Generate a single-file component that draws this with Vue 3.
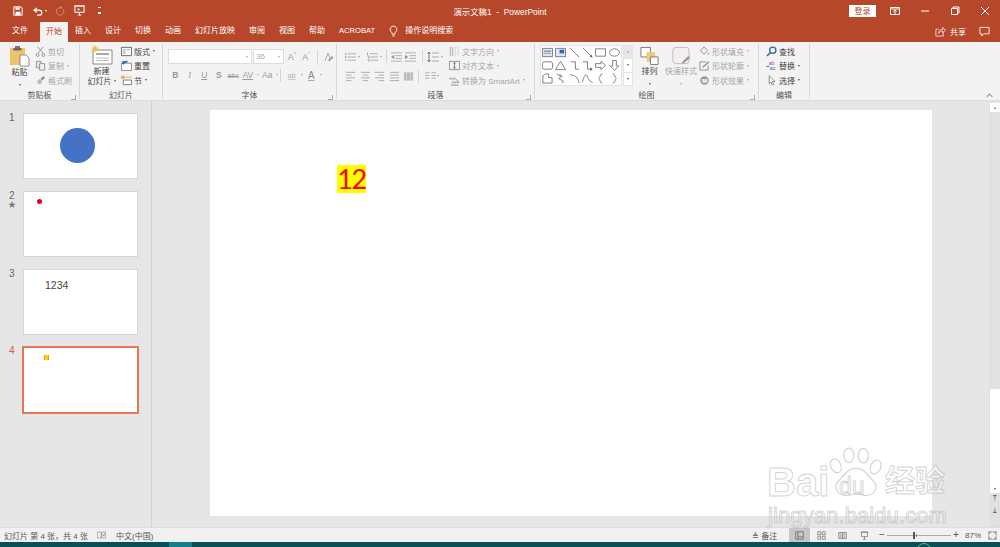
<script setup>
// 图标 (inner svg markup, viewBox 0 0 12 12)
const g = '#8f8f8f'
const icons = {
  cut: `<path d="M3 1l6 7M9 1L3 8" stroke="${g}" fill="none"/><circle cx="2.8" cy="9.8" r="1.6" stroke="${g}" fill="none"/><circle cx="9.2" cy="9.8" r="1.6" stroke="${g}" fill="none"/>`,
  copy: `<path d="M1.5 1.5h5v7h-5z" fill="#e8e8e8" stroke="${g}"/><path d="M5 4h5.5v7H5z" fill="#f3f3f3" stroke="${g}"/>`,
  brush: `<path d="M6 4l3-3 2 2-3 3z" fill="${g}"/><path d="M2 7l3-3 3 3-2 3H4z" fill="#bbb"/>`,
  layout: `<path d="M.5 1.5h11v9H.5z" fill="#fff" stroke="#666"/><path d="M2 3h3v6H2zM6 3h4v2H6z" fill="#c9c9c9"/>`,
  reset: `<path d="M.5 3.5h11v8H.5z" fill="#fff" stroke="#888"/><path d="M2 4.5A4 4 0 0 1 7 2" stroke="#2b6aa8" stroke-width="2" fill="none"/><path d="M1 1l4 .5-2 3.5z" fill="#2b6aa8"/>`,
  section: `<path d="M.5 1.5h3v2h-3z" fill="#f4c77b" stroke="#d99a3c"/><path d="M5 2.5h6.5" stroke="#f0a030"/><path d="M2.5 5.5h9v5h-9z" fill="#fff" stroke="#777"/>`,
  fill: `<path d="M5.5 1l4 4-4 4-4-4z" fill="#eee" stroke="${g}"/><circle cx="10.3" cy="8.5" r="1.2" fill="#bbb"/>`,
  outline: `<path d="M1 2h7M1 2v9h9V6" stroke="${g}" fill="none"/><path d="M4 8l7-6" stroke="${g}" stroke-width="1.5"/>`,
  effect: `<circle cx="6" cy="6" r="4.6" fill="#999"/><path d="M2 4h8l-1 5H4z" fill="#e4e4e4" stroke="${g}" stroke-width=".6"/>`,
  find: `<circle cx="7.4" cy="4.6" r="3.4" fill="none" stroke="#2b6aa8" stroke-width="1.4"/><path d="M5 7L1 11" stroke="#2b6aa8" stroke-width="1.6"/>`,
  replace: `<text x="3" y="5" font-size="5.4" fill="#8a4bb5" font-family="Liberation Sans">ab</text><text x="4" y="11" font-size="5.4" fill="#2b6aa8" font-family="Liberation Sans">ac</text><path d="M.5 7h3" stroke="#2b6aa8"/>`,
  select: `<path d="M3.5 .8v8.6l2-1.7 1.5 3.2 1.4-.7L7 7h2.7z" fill="#fff" stroke="#666" stroke-width=".8"/>`,
  dirText: `<path d="M1.5 1v10M4 1v10" stroke="#a5a5a5"/><path d="M7 1v10M10 1v10" stroke="#c4c4c4" stroke-dasharray="1.5 1"/>`,
  alignText: `<path d="M.5 1.5h11v9H.5z" fill="none" stroke="${g}"/><path d="M6 3v6M4.5 4L6 2.5 7.5 4M4.5 8L6 9.5 7.5 8" stroke="#777" fill="none"/>`,
  smartArt: `<path d="M0 3h7v2H0zM3 7h5v2H3z" fill="#b5b5b5"/><path d="M7 4l4 4H8" stroke="${g}" fill="none"/><path d="M2 11h9" stroke="${g}"/>`,
}

const clipRows = [
  {text: '剪切', icon: 'cut'},
  {text: '复制', icon: 'copy', arrow: true},
  {text: '格式刷', icon: 'brush'},
]
const slideRows = [
  {text: '版式', icon: 'layout', arrow: true},
  {text: '重置', icon: 'reset'},
  {text: '节', icon: 'section', arrow: true},
]
const paraRows = [
  {text: '文字方向', icon: 'dirText', arrow: true},
  {text: '对齐文本', icon: 'alignText', arrow: true},
  {text: '转换为 SmartArt', icon: 'smartArt', arrow: true},
]
const shapeRows = [
  {text: '形状填充', icon: 'fill', arrow: true},
  {text: '形状轮廓', icon: 'outline', arrow: true},
  {text: '形状效果', icon: 'effect', arrow: true},
]
const editRows = [
  {text: '查找', icon: 'find'},
  {text: '替换', icon: 'replace', arrow: true},
  {text: '选择', icon: 'select', arrow: true},
]

const tabs = ['文件', '开始', '插入', '设计', '切换', '动画', '幻灯片放映', '审阅', '视图', '帮助', 'ACROBAT']

const aligns = ['M1 2h10M1 5h6M1 8h10M1 11h6', 'M1 2h10M3 5h6M1 8h10M3 11h6', 'M1 2h10M5 5h6M1 8h10M5 11h6', 'M1 2h10M1 5h10M1 8h10M1 11h10']

// 形状库
const shapes = [
  '<path d="M.5 1.5h11v9H.5z" fill="#dfe8f2" stroke="#777"/><path d="M2 4h8v1H2z" fill="#2b6aa8"/><path d="M2 7h8" stroke="#999"/>',
  '<path d="M.5 1.5h11v9H.5z" fill="#dfe8f2" stroke="#777"/><path d="M5 3h5v4H5z" fill="#2b6aa8"/>',
  '<path d="M1 1l10 10" stroke="#777" fill="none"/>',
  '<path d="M1 1l9 9" stroke="#777" fill="none"/><path d="M8.500 10.500l3 1-1-3z" fill="#555"/>',
  '<path d="M.5 2h11v8H.5z" fill="none" stroke="#777"/>',
  '<ellipse cx="6" cy="6" rx="5.500" ry="4" fill="none" stroke="#777"/>',
  '<rect x=".5" y="2" width="11" height="8" rx="2" fill="none" stroke="#777"/>',
  '<path d="M6 1.500l5.500 9H.5z" fill="none" stroke="#777"/>',
  '<path d="M2 2h5v8h4" fill="none" stroke="#777"/>',
  '<path d="M1 2h5v8h3" fill="none" stroke="#777"/><path d="M9 8l2.500 2-2.500 2z" fill="#555"/>',
  '<path d="M.5 4h6V1.500L11.500 6l-5 4.500V8h-6z" fill="none" stroke="#777"/>',
  '<path d="M4 .5h4v6h2.500L6 11.500 1.500 6.500H4z" fill="none" stroke="#777"/>',
  '<path d="M1 11V3l3-2h3v4h4v6z" fill="none" stroke="#777"/>',
  '<path d="M2 1l5 3-3 2 5 3-1 2M5 1l3 3" fill="none" stroke="#777"/>',
  '<path d="M1 2c5 0 9 3 10 9" fill="none" stroke="#777"/>',
  '<path d="M.5 10C2 4 3 2 4.500 2S7 10 11.500 10" fill="none" stroke="#777"/>',
  '<path d="M8 1C5 1 6 5 4 6c2 1 1 5 4 5" fill="none" stroke="#777"/>',
  '<path d="M4 1c3 0 2 4 4 5-2 1-1 5-4 5" fill="none" stroke="#777"/>',
]
</script>

<template>
  <div class="app">
    <!-- 标题栏 -->
    <div class="titlebar">
      <div class="qat">
        <svg class="qa save" viewBox="0 0 12 12"><path d="M1 1h8.500L11 2.500V11H1z" fill="none" stroke="#fff" stroke-width="1.200"/><path d="M3 1.500h5v3H3zM3 7h6v4H3z" fill="#fff"/></svg>
        <svg class="qa undo" viewBox="0 0 12 12"><path d="M3 5h4.500a3 3 0 0 1 0 6H5" fill="none" stroke="#fff" stroke-width="1.500"/><path d="M4.500 1.500v7L0 5z" fill="#fff"/></svg>
        <span class="mini-arrow white"></span>
        <svg class="qa redo" viewBox="0 0 12 12"><path d="M9.500 3.500a4.500 4.500 0 1 1-3-1.500" fill="none" stroke="#d98a73" stroke-width="1.200"/><path d="M6 0v4l3-2z" fill="#d98a73"/></svg>
        <svg class="qa present" viewBox="0 0 12 12"><path d="M1 1h10v7H1z" fill="none" stroke="#fff" stroke-width="1.100"/><path d="M.5 1h11M6 8v3M4 11h4" stroke="#fff"/><path d="M4 3.500l3 1-3 1.500z" fill="#fff"/></svg>
        <span class="qat-more"></span>
      </div>
      <div class="doc-title">演示文稿1 &nbsp;-&nbsp; PowerPoint</div>
      <div class="win-btns">
        <button class="login">登录</button>
        <svg class="win" viewBox="0 0 12 12"><path d="M1.500 2.500h9v7h-9zM1.500 4h9" fill="none" stroke="#fff"/><path d="M6 9V5M4.500 6.500L6 5l1.500 1.500" fill="none" stroke="#fff"/></svg>
        <svg class="win" viewBox="0 0 12 12"><path d="M2 6h8" stroke="#fff"/></svg>
        <svg class="win" viewBox="0 0 12 12"><path d="M2.500 3.500h6v6h-6zM4 3.500V2h6v6H8.500" fill="none" stroke="#fff"/></svg>
        <svg class="win" viewBox="0 0 12 12"><path d="M2 2l8 8M10 2l-8 8" stroke="#fff"/></svg>
      </div>
    </div>

    <!-- 选项卡 -->
    <div class="tabbar">
      <div v-for="t in tabs" :key="t" class="tab" :class="{active: t === '开始', latin: t === 'ACROBAT'}">{{ t }}</div>
      <svg class="bulb" viewBox="0 0 10 13"><path d="M5 1a3.800 3.800 0 0 0-2 7l.5 2h3L7 8a3.800 3.800 0 0 0-2-7zM3.500 12h3" fill="none" stroke="#fff"/></svg>
      <div class="tell-me">操作说明搜索</div>
      <div class="share">
        <svg class="share-icon" viewBox="0 0 12 12"><path d="M9 7v4H1V3.500h3" fill="none" stroke="#fff" stroke-width=".8"/><path d="M4 8c0-3 2-4.500 4.500-4.500V1.500L11.500 4.500 8.500 7.500V5.500C6.500 5.500 5 6.500 4 8z" fill="none" stroke="#fff" stroke-width=".8"/></svg>
        <span>共享</span>
        <svg class="comment" viewBox="0 0 12 12"><path d="M1 1.500h10v7H5L3 11V8.500H1z" fill="none" stroke="#fff" stroke-width=".9"/></svg>
      </div>
    </div>

    <!-- 功能区 -->
    <div class="ribbon">
      <div class="group clip">
        <div class="group-body">
          <div class="big paste">
            <svg class="big-icon" viewBox="0 0 20 22"><path d="M0 3h15v17H0z" fill="#eec26f"/><path d="M5 1h5v3H5z" fill="#777"/><path d="M3.500 3h8v2.500h-8z" fill="#666"/><path d="M10 10h6l3 3v8h-9z" fill="#fff" stroke="#777" stroke-width=".8"/></svg>
            <span class="big-text dark">粘贴</span>
            <span class="mini-arrow"></span>
          </div>
          <div class="small-col">
            <div v-for="r in clipRows" :key="r.text" class="small muted">
              <svg class="small-icon" viewBox="0 0 12 12" v-html="icons[r.icon]"></svg>
              <span>{{ r.text }}</span>
              <i v-if="r.arrow" class="mini-arrow pale"></i>
            </div>
          </div>
        </div>
        <div class="group-label">剪贴板<span class="launcher"></span></div>
      </div>

      <div class="group slides">
        <div class="group-body">
          <div class="big new-slide">
            <svg class="big-icon wide" viewBox="0 0 22 20"><path d="M2 5h19v14H2z" fill="#fff" stroke="#8a8a8a"/><path d="M5 9h13" stroke="#aaa" stroke-width="2"/><path d="M5 13h13M5 15.500h13" stroke="#bbb"/><circle cx="4" cy="4" r="2.300" fill="#f5b942"/><path d="M4 0v8M0 4h8M1 1l6 6M7 1L1 7" stroke="#f5b942" stroke-width=".6"/></svg>
            <span class="big-text dark">新建</span>
            <span class="big-text dark">幻灯片<i class="mini-arrow inline"></i></span>
          </div>
          <div class="small-col">
            <div v-for="r in slideRows" :key="r.text" class="small">
              <svg class="small-icon" viewBox="0 0 12 12" v-html="icons[r.icon]"></svg>
              <span>{{ r.text }}</span>
              <i v-if="r.arrow" class="mini-arrow"></i>
            </div>
          </div>
        </div>
        <div class="group-label">幻灯片</div>
      </div>

      <div class="group font">
        <div class="group-body rows">
          <div class="row top">
            <div class="combo name"><i class="mini-arrow pale"></i></div>
            <div class="combo size"><span>36</span><i class="mini-arrow pale"></i></div>
            <span class="grow-a">A<sup>^</sup></span>
            <span class="grow-a">A<sup>ˇ</sup></span>
            <span class="sep"></span>
            <svg class="tool-icon" viewBox="0 0 12 12"><path d="M3 10L6 2l2 5" fill="none" stroke="#aaa"/><path d="M6 9l4-4 1.500 1.500-4 4z" fill="#b98fb0"/></svg>
          </div>
          <div class="row">
            <span class="tool bold">B</span>
            <span class="tool ital">I</span>
            <span class="tool under">U</span>
            <span class="tool bold">S</span>
            <span class="tool tiny strike">abc</span>
            <span class="tool under">AV</span><i class="mini-arrow pale slot"></i>
            <span class="tool">Aa</span><i class="mini-arrow pale slot"></i>
            <span class="sep mid"></span>
            <span class="tool marker">ab</span><i class="mini-arrow pale slot"></i>
            <span class="tool big-a">A</span><i class="mini-arrow pale slot"></i>
          </div>
        </div>
        <div class="group-label">字体<span class="launcher"></span></div>
      </div>

      <div class="group para">
        <div class="group-body">
          <div class="rows para-left">
            <div class="row top">
              <svg class="tool-icon list" viewBox="0 0 12 12"><path d="M3 2.500h9M3 6h9M3 9.500h9" stroke="#aaa"/><path d="M0 2h1.500v1.500H0zM0 5.200h1.500v1.500H0zM0 8.700h1.500v1.500H0z" fill="#999"/></svg><i class="mini-arrow pale slot"></i>
              <svg class="tool-icon list second" viewBox="0 0 12 12"><path d="M3 2.500h9M3 6h9M3 9.500h9" stroke="#aaa"/><path d="M.5 1v3M.5 5h1.500v3M.5 9h1.500v2" stroke="#999" fill="none"/></svg><i class="mini-arrow pale slot"></i>
              <span class="sep para-sep"></span>
              <svg class="tool-icon indent" viewBox="0 0 12 12"><path d="M0 1.500h12M5 4.500h7M5 7.500h7M0 10.500h12" stroke="#aaa"/><path d="M3.500 3.500v5L0 6z" fill="#6f9cc8"/></svg>
              <svg class="tool-icon indent" viewBox="0 0 12 12"><path d="M0 1.500h12M5 4.500h7M5 7.500h7M0 10.500h12" stroke="#aaa"/><path d="M0 3.500v5L3.500 6z" fill="#6f9cc8"/></svg>
              <span class="sep para-sep"></span>
              <svg class="tool-icon" viewBox="0 0 12 12"><path d="M5 2h7M5 6h7M5 10h7" stroke="#aaa"/><path d="M2 1v10M.5 3L2 1l1.500 2M.5 9L2 11l1.500-2" fill="none" stroke="#777"/></svg><i class="mini-arrow pale slot"></i>
            </div>
            <div class="row align-row">
              <svg v-for="d in aligns" :key="d" class="tool-icon align" viewBox="0 0 12 12"><path :d="d" stroke="#aaa"/></svg>
              <svg class="tool-icon align" viewBox="0 0 12 12"><path d="M1 2h10v9H1z" fill="#bbb"/><path d="M4 .5v11M8 .5v11" stroke="#f3f3f3" stroke-width=".5"/></svg>
              <span class="sep mid"></span>
              <svg class="tool-icon cols" viewBox="0 0 12 12"><path d="M0 2.500h5M0 5.500h5M0 8.500h5M7 2.500h5M7 5.500h5M7 8.500h5" stroke="#aaa"/></svg><i class="mini-arrow pale slot"></i>
            </div>
          </div>
          <div class="small-col para-col">
            <div v-for="r in paraRows" :key="r.text" class="small muted">
              <svg class="small-icon" viewBox="0 0 12 12" v-html="icons[r.icon]"></svg>
              <span>{{ r.text }}</span>
              <i class="mini-arrow pale"></i>
            </div>
          </div>
        </div>
        <div class="group-label">段落<span class="launcher"></span></div>
      </div>

      <div class="group draw">
        <div class="group-body">
          <div class="gallery">
            <svg v-for="(s, i) in shapes" :key="i" class="shape" viewBox="0 0 12 12" v-html="s"></svg>
          </div>
          <div class="gallery-scroll">
            <span class="up"><i class="mini-arrow up-arrow pale"></i></span>
            <span><i class="mini-arrow"></i></span>
            <span class="more"><i class="mini-arrow"></i></span>
          </div>
          <div class="big arrange">
            <svg class="big-icon" viewBox="0 0 20 20"><path d="M1 1h10v10H1z" fill="#fff" stroke="#777"/><path d="M7 6h9v6h-4v4H7z" fill="#f0c67c"/><path d="M11 11h8v8h-8z" fill="#fff" stroke="#777"/></svg>
            <span class="big-text dark">排列</span>
            <span class="mini-arrow arrow-low"></span>
          </div>
          <div class="big quick">
            <svg class="big-icon" viewBox="0 0 20 20"><rect x="1" y="1" width="17" height="17" rx="3" fill="#f2eef2" stroke="#bbb"/><path d="M10 17l7-7 2 2-7 6z" fill="#999"/></svg>
            <span class="big-text pale-text">快速样式</span>
            <span class="mini-arrow pale arrow-low"></span>
          </div>
          <div class="small-col shape-col">
            <div v-for="r in shapeRows" :key="r.text" class="small muted">
              <svg class="small-icon" viewBox="0 0 12 12" v-html="icons[r.icon]"></svg>
              <span>{{ r.text }}</span>
              <i class="mini-arrow pale"></i>
            </div>
          </div>
        </div>
        <div class="group-label">绘图<span class="launcher"></span></div>
      </div>

      <div class="group edit">
        <div class="group-body">
          <div class="small-col edit-col">
            <div v-for="r in editRows" :key="r.text" class="small">
              <svg class="small-icon" viewBox="0 0 12 12" v-html="icons[r.icon]"></svg>
              <span>{{ r.text }}</span>
              <i v-if="r.arrow" class="mini-arrow"></i>
            </div>
          </div>
        </div>
        <div class="group-label">编辑</div>
      </div>

      <svg class="collapse" viewBox="0 0 10 6"><path d="M1 5l4-4 4 4" fill="none" stroke="#555" stroke-width="1.300"/></svg>
    </div>

    <!-- 主体 -->
    <div class="main">
      <div class="thumbs">
        <div class="thumb-row">
          <div class="thumb-num">1</div>
          <div class="thumb"><span class="circle"></span></div>
        </div>
        <div class="thumb-row">
          <div class="thumb-num">2<em>★</em></div>
          <div class="thumb"><span class="dot"></span></div>
        </div>
        <div class="thumb-row">
          <div class="thumb-num">3</div>
          <div class="thumb"><span class="num-text">1234</span></div>
        </div>
        <div class="thumb-row current">
          <div class="thumb-num">4</div>
          <div class="thumb"><span class="mini-mark"></span></div>
        </div>
      </div>

      <div class="editor">
        <div class="slide">
          <span class="slide-text">12</span>
        </div>
      </div>

      <div class="vscroll">
        <span class="vbtn"><i class="mini-arrow up-arrow dark-arrow"></i></span>
        <div class="vtrack"><div class="vthumb"></div></div>
        <span class="vbtn"><i class="mini-arrow dark-arrow"></i></span>
        <span class="vnav">⤒</span>
        <span class="vnav">⤓</span>
      </div>

      <!-- 水印 -->
      <div class="watermark">
        <svg class="paw" viewBox="0 0 100 90"><ellipse cx="14" cy="34" rx="9" ry="13" transform="rotate(-25 14 34)"/><ellipse cx="37" cy="15" rx="9" ry="13"/><ellipse cx="63" cy="16" rx="9" ry="13"/><ellipse cx="85" cy="36" rx="9" ry="13" transform="rotate(25 85 36)"/><path d="M50 38c14 0 22 14 32 24 8 10 2 25-14 25-8 0-12-3-18-3s-10 3-18 3c-16 0-22-15-14-25 10-10 18-24 32-24z"/></svg>
        <span class="wm wm-bai">Bai</span>
        <span class="wm wm-du">du</span>
        <span class="wm wm-cn">经验</span>
        <span class="wm wm-url">jingyan.baidu.com</span>
      </div>
    </div>

    <!-- 状态栏 -->
    <div class="statusbar">
      <span class="st-count">幻灯片 第 4 张，共 4 张</span>
      <svg class="st-check" viewBox="0 0 12 10"><path d="M.5 1h5v8h-5zM6.500 1h5v8h-5z" fill="none" stroke="#777" stroke-width=".7"/><path d="M7.500 4l1.500 2 2-4" fill="none" stroke="#666" stroke-width=".7"/></svg>
      <span class="st-lang">中文(中国)</span>
      <span class="st-notes">≜ 备注</span>
      <div class="st-views">
        <span class="view active"><svg viewBox="0 0 12 12"><path d="M1 1h10v10H1zM4 1v10M4 8h7" fill="none" stroke="#666"/></svg></span>
        <span class="view"><svg viewBox="0 0 12 12"><path d="M1 1h4v4H1zM7 1h4v4H7zM1 7h4v4H1zM7 7h4v4H7z" fill="none" stroke="#777"/></svg></span>
        <span class="view"><svg viewBox="0 0 12 12"><path d="M1 2h10v8H1zM6 2v8" fill="none" stroke="#777"/><path d="M2 3h3v6H2zM7 3h3v6H7z" fill="#bbb"/></svg></span>
        <span class="view"><svg viewBox="0 0 12 12"><path d="M1 1.500h10M2 1.500h8v6H2zM6 7.500V11M4 11h4" fill="none" stroke="#777"/></svg></span>
      </div>
      <div class="zoom">
        <span class="pm">−</span>
        <div class="zoom-track"><span class="zoom-mid"></span><span class="zoom-thumb"></span></div>
        <span class="pm">+</span>
        <span class="pct">87%</span>
        <svg class="fit" viewBox="0 0 12 12"><path d="M.5.500h11v11H.5z" fill="none" stroke="#777" stroke-width=".7"/><path d="M2 4.500V2h2.500M7.500 2H10v2.500M10 7.500V10H7.500M4.500 10H2V7.500" fill="none" stroke="#777"/></svg>
      </div>
    </div>

    <!-- 任务栏 -->
    <div class="taskbar"><span class="task-item"></span><span class="task-dot"></span></div>
  </div>
</template>

<style scoped>
.app {
  width: 1000px;
  height: 547px;
  display: flex;
  flex-direction: column;
  overflow: hidden;
  position: relative;
  font-family: "Liberation Sans", "Noto Sans CJK SC", sans-serif;
  font-size: 8px;
  color: #444;
  background: #e6e6e6;
}

.mini-arrow {
  display: inline-block;
  width: 0;
  height: 0;
  border-left: 1.5px solid transparent;
  border-right: 1.5px solid transparent;
  border-top: 2px solid #555;
  flex: none;
}
.mini-arrow.white { border-top-color: #fff; }
.mini-arrow.pale { border-top-color: #aaa; }
.mini-arrow.up-arrow { border-top: 0; border-bottom: 2px solid #aaa; }
.mini-arrow.inline { margin-left: 2px; vertical-align: 2px; }

/* 标题栏 */
.titlebar {
  height: 21px;
  flex: none;
  background: #b7472a;
  color: #fff;
  display: flex;
  align-items: center;
  position: relative;
}
.qat {
  display: flex;
  align-items: center;
  width: 300px;
  box-sizing: border-box;
  padding-left: 13px;
}
.qa { width: 10px; height: 10px; flex: none; }
.undo { margin-left: 10px; }
.titlebar .mini-arrow { margin-left: 2px; }
.redo { margin-left: 8px; }
.present { margin-left: 9px; width: 11px; height: 11px; }
.qat-more {
  width: 3px;
  height: 4px;
  margin-left: 13px;
  border-top: 1px solid #fff;
  border-bottom: 2px solid #fff;
}
.doc-title {
  width: 400px;
  text-align: center;
  font-size: 8.400px;
}
.win-btns {
  margin-left: auto;
  display: flex;
  align-items: center;
  padding-right: 9px;
}
.login {
  width: 27px;
  height: 12px;
  padding: 0;
  border: 0;
  background: #fff;
  color: #b7472a;
  font: 8px "Noto Sans CJK SC", sans-serif;
  margin-right: 13px;
}
.win { width: 12px; height: 12px; margin-right: 18px; flex: none; }
.win:last-child { margin-right: 0; }

/* 选项卡 */
.tabbar {
  height: 21px;
  flex: none;
  background: #b7472a;
  color: #fff;
  display: flex;
  align-items: stretch;
  padding-left: 5px;
}
.tab {
  padding: 0 7px;
  line-height: 20px;
  white-space: nowrap;
}
.tab.latin { font-size: 7.600px; }
.tab.active {
  background: #f3f3f3;
  color: #b7472a;
  margin: 1px 0 0 5px;
  line-height: 19px;
  padding: 0 6px;
  width: 28px;
  box-sizing: border-box;
}
.bulb { width: 9px; height: 12px; margin: 4px 0 0 7px; flex: none; }
.tell-me { margin-left: 7px; line-height: 20px; white-space: nowrap; }
.share {
  margin-left: auto;
  display: flex;
  align-items: center;
  padding-right: 10px;
  height: 20px;
}
.share-icon { width: 11px; height: 11px; margin-right: 4px; }
.comment { width: 11px; height: 11px; margin-left: 13px; }

/* 功能区 */
.ribbon {
  height: 59px;
  flex: none;
  background: #f3f3f3;
  border-bottom: 1px solid #dcdcdc;
  box-sizing: border-box;
  display: flex;
  position: relative;
  padding-top: 2px;
}
.group {
  height: 55px;
  flex: none;
  box-sizing: border-box;
  border-right: 1px solid #d8d8d8;
  display: flex;
  flex-direction: column;
  position: relative;
}
.clip { width: 80px; }
.slides { width: 83px; }
.font { width: 174px; }
.para { width: 198px; }
.draw { width: 224px; }
.edit { width: 51px; }
.group-body {
  height: 45px;
  box-sizing: border-box;
  display: flex;
  flex: none;
}
.group-label {
  text-align: center;
  line-height: 13px;
  color: #555;
  position: relative;
}
.launcher {
  position: absolute;
  right: 3px;
  bottom: 2px;
  width: 4px;
  height: 4px;
  border-left: 1px solid #aaa;
  border-bottom: 1px solid #aaa;
  transform: scaleX(-1);
}

.big {
  display: flex;
  flex-direction: column;
  align-items: center;
  flex: none;
}
.big-icon { width: 19px; height: 20px; margin-top: 2px; margin-bottom: 2px; flex: none; }
.big-text { line-height: 10px; white-space: nowrap; }
.dark { color: #444; }
.pale-text { color: #a6a6a6; }
.paste { width: 31px; margin-left: 4px; }
.paste .big-icon { margin-bottom: 1px; margin-top: 1px; width: 20px; height: 22px; }
.paste .mini-arrow { margin-top: 6px; }
.arrow-low { margin-top: 6px; }

.small-col {
  display: flex;
  flex-direction: column;
  flex: none;
}
.small {
  height: 14.500px;
  display: flex;
  align-items: center;
  white-space: nowrap;
}
.small .mini-arrow { margin-left: 3px; }
.small-icon { width: 11px; height: 11px; margin-right: 2px; flex: none; }
.muted { color: #a6a6a6; }

.new-slide { width: 37px; margin-left: 3px; }
.new-slide .big-icon { width: 22px; height: 20px; margin-top: 1px; margin-bottom: 2px; }
.slides .small-col { margin-left: 1px; }

/* 字体 */
.rows { flex-direction: column; }
.font .rows { padding: 5px 0 0 5px; }
.row { display: flex; align-items: center; }
.row.top { height: 15px; }
.font .row:last-child { margin-top: 4px; height: 14px; }
.combo {
  height: 15px;
  box-sizing: border-box;
  background: #fff;
  border: 1px solid #dcdcdc;
  display: flex;
  align-items: center;
  justify-content: flex-end;
  padding-right: 3px;
  color: #aaa;
}
.combo.name { width: 84px; flex: none; }
.combo.size { width: 31px; flex: none; margin-left: 1px; justify-content: space-between; padding-left: 2px; }
.grow-a { color: #999; font-size: 9px; width: 14px; text-align: center; flex: none; }
.grow-a sup { font-size: 5px; line-height: 0; }
.combo + .combo + .grow-a { margin-left: 1px; }
.sep { width: 1px; height: 13px; background: #d4d4d4; margin: 0 4px; flex: none; }
.tool {
  width: 14.500px;
  text-align: center;
  color: #999;
  font-size: 8.500px;
  flex: none;
}
.tool-icon { width: 12px; height: 12px; flex: none; }
.slot { margin: 0 1.500px; }
.bold { font-weight: bold; }
.ital { font-style: italic; font-family: "Liberation Serif", serif; }
.under { text-decoration: underline; }
.strike { text-decoration: line-through; }
.tiny { font-size: 7px; }
.marker { color: #aaa; text-decoration: underline; text-decoration-color: #c9c9c9; font-size: 7px; }
.big-a { font-size: 10px; color: #888; text-decoration: underline; text-decoration-color: #aaa; }

/* 段落 */
.para-left { width: 112px; flex: none; padding: 6px 0 0 8px; box-sizing: border-box; display: flex; }
.para-left .row.top { height: 13px; }
.align-row { margin-top: 6px; height: 14px; }
.list { width: 11px; }
.list.second { margin-left: 6px; }
.indent { margin-right: 3px; width: 11px; }
.para-sep { margin: 0 4px 0 3px; }
.align { width: 11px; margin-right: 3.500px; }
.mid { margin: 0 4px 0 0; }
.cols { width: 11px; margin-left: 2px; }

/* 绘图 */
.draw .group-body { padding-left: 5px; }
.gallery {
  width: 82px;
  height: 41px;
  box-sizing: border-box;
  background: #fff;
  border: 1px solid #e2e2e2;
  display: grid;
  grid-template-columns: repeat(6, 1fr);
  grid-template-rows: repeat(3, 1fr);
  place-items: center;
  flex: none;
  margin-top: 1px;
}
.shape { width: 11px; height: 11px; }
.gallery-scroll {
  width: 10px;
  height: 41px;
  margin: 1px 0 0 1px;
  display: flex;
  flex-direction: column;
  flex: none;
}
.gallery-scroll span {
  flex: 1;
  background: #fff;
  border: 1px solid #e4e4e4;
  border-top-width: 0;
  display: flex;
  align-items: center;
  justify-content: center;
}
.gallery-scroll .up { background: #e6e6e6; border-top-width: 1px; }
.arrange { width: 25px; margin-left: 4px; }
.arrange .big-icon, .quick .big-icon { margin-bottom: 1px; }
.quick { width: 36px; margin-left: 1px; }

/* 编辑 */
.edit-col { margin-left: 7px; }

.collapse {
  position: absolute;
  right: 7px;
  bottom: 2px;
  width: 7px;
  height: 5px;
}

/* 主体 */
.main {
  flex: 1;
  display: flex;
  min-height: 0;
  position: relative;
}
.thumbs {
  width: 152px;
  flex: none;
  box-sizing: border-box;
  border-right: 1px solid #d2d2d2;
  padding-top: 12px;
  display: flex;
  flex-direction: column;
  gap: 12px;
}
.thumb-row { display: flex; height: 66px; }
.thumb-num {
  width: 23px;
  padding: 0 0 0 9px;
  box-sizing: border-box;
  color: #666;
  font-size: 10px;
  line-height: 10px;
  flex: none;
}
.thumb-num em {
  display: block;
  font-style: normal;
  font-size: 8px;
  line-height: 8px;
  margin-left: -1px;
  color: #777;
}
.thumb {
  width: 115px;
  height: 66px;
  background: #fff;
  border: 1px solid #d6d6d6;
  box-sizing: border-box;
  position: relative;
}
.current { margin-top: -1px; }
.current .thumb-num { color: #d9583a; }
.current .thumb {
  width: 117px;
  height: 68px;
  border: 2px solid #ea7553;
  margin-left: -1px;
}
.circle {
  position: absolute;
  left: 36px;
  top: 14px;
  width: 35px;
  height: 35px;
  border-radius: 50%;
  background: #4472c4;
}
.dot {
  position: absolute;
  left: 13px;
  top: 7px;
  width: 5px;
  height: 5px;
  border-radius: 50%;
  background: #e0001b;
}
.num-text {
  position: absolute;
  left: 21px;
  top: 9px;
  font-size: 10.500px;
  line-height: 13px;
  color: #444;
}
.mini-mark {
  position: absolute;
  left: 20px;
  top: 7px;
  width: 5px;
  height: 5px;
  background: #ffd400;
  box-shadow: inset 1px 0 #f0a000, inset -1px 0 #f0a000;
}

.editor {
  flex: 1;
  padding: 9px 57px 0 58px;
  box-sizing: border-box;
  min-width: 0;
}
.slide {
  width: 722px;
  height: 406px;
  background: #fff;
  position: relative;
}
.slide-text {
  position: absolute;
  left: 127px;
  top: 55px;
  width: 29px;
  height: 28px;
  background: #ff0;
  color: #f00;
  font-family: Lato, "Liberation Sans", sans-serif;
  font-size: 27px;
  line-height: 28px;
  letter-spacing: -1.500px;
  text-align: center;
}

.vscroll {
  width: 11px;
  flex: none;
  display: flex;
  flex-direction: column;
  align-items: center;
  padding-top: 2px;
  background: #e1e1e1;
}
.vbtn {
  width: 10px;
  height: 9px;
  background: #fff;
  display: flex;
  align-items: center;
  justify-content: center;
  flex: none;
}
.mini-arrow.dark-arrow { border-top-color: #555; }
.mini-arrow.up-arrow.dark-arrow { border-bottom-color: #555; }
.vtrack { height: 372px; width: 10px; position: relative; flex: none; }
.vthumb {
  position: absolute;
  left: 0;
  top: 277px;
  bottom: 0;
  width: 100%;
  background: #fff;
}
.vnav {
  height: 11px;
  line-height: 11px;
  font-size: 8px;
  color: #666;
  flex: none;
}

/* 水印 */
.watermark {
  position: absolute;
  left: 760px;
  top: 335px;
  width: 200px;
  height: 100px;
  pointer-events: none;
}
.paw {
  position: absolute;
  left: 68px;
  top: 8px;
  width: 56px;
  height: 56px;
  fill: rgba(255, 255, 255, .35);
  stroke: rgba(165, 165, 165, .55);
  stroke-width: 1.800;
}
.wm {
  position: absolute;
  color: rgba(255, 255, 255, .5);
  -webkit-text-stroke: 1px rgba(175, 175, 175, .55);
  white-space: nowrap;
}
.wm-bai { left: 7px; top: 24px; font-size: 40px; line-height: 44px; font-weight: bold; }
.wm-du { left: 79px; top: 38px; font-size: 23px; line-height: 24px; }
.wm-cn {
  left: 125px;
  top: 26px;
  font-size: 30px;
  line-height: 38px;
  font-weight: bold;
}
.wm-url { left: 8px; top: 68px; font-size: 22px; line-height: 24px; letter-spacing: .1px; }

/* 状态栏 */
.statusbar {
  height: 15px;
  flex: none;
  background: #f1f1f1;
  border-top: 1px solid #dcdcdc;
  box-sizing: border-box;
  display: flex;
  align-items: center;
  color: #555;
  white-space: nowrap;
}
.st-count { margin-left: 4px; width: 93px; }
.st-check { width: 9px; height: 8px; }
.st-lang { margin-left: 10px; }
.st-notes { margin-left: auto; width: 37px; }
.st-views { display: flex; height: 100%; }
.view {
  width: 21.500px;
  display: flex;
  align-items: center;
  justify-content: center;
}
.view.active { background: #c6c6c6; }
.view svg { width: 9px; height: 9px; }
.zoom { display: flex; align-items: center; margin-left: 3px; padding-right: 3px; }
.pm { width: 8px; text-align: center; font-size: 10px; line-height: 10px; color: #555; }
.zoom-track {
  width: 64px;
  height: 1px;
  background: #aaa;
  margin: 0 1px;
  position: relative;
}
.zoom-thumb {
  position: absolute;
  left: 26px;
  top: -3px;
  width: 2px;
  height: 7px;
  background: #555;
}
.zoom-mid {
  position: absolute;
  left: 29px;
  top: -1px;
  width: 1px;
  height: 3px;
  background: #888;
}
.pct { margin-left: 5px; }
.fit { width: 9px; height: 9px; margin-left: 7px; }

.taskbar {
  height: 5px;
  flex: none;
  background: #094f58;
  position: relative;
  overflow: hidden;
}
.task-item {
  position: absolute;
  left: 169px;
  top: 0;
  width: 23px;
  height: 5px;
  background: #167f8a;
}
.task-dot {
  position: absolute;
  left: 917px;
  top: 1px;
  width: 14px;
  height: 14px;
  box-sizing: border-box;
  border: 1px solid #3fd07f;
  border-radius: 50%;
}
</style>

<style>
html, body { margin: 0; padding: 0; overflow: hidden; }
</style>
